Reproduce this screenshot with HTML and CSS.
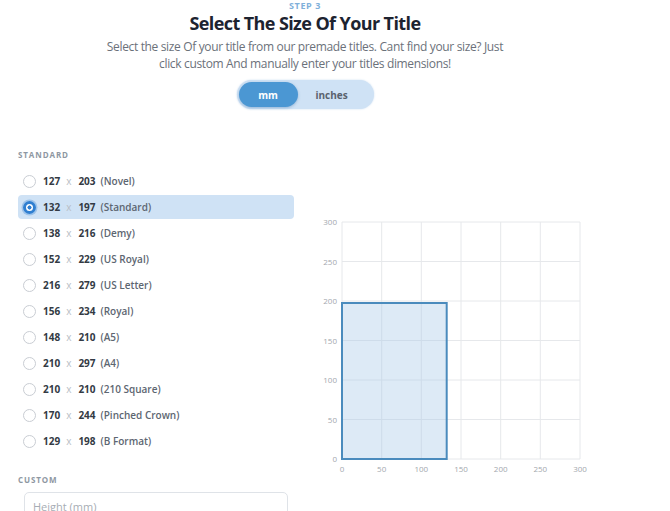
FILE: index.html
```html
<!DOCTYPE html>
<html lang="en">
<head>
    <meta charset="UTF-8">
    <meta name="viewport" content="width=device-width, initial-scale=1.0">
    <title>Step 3 | Title Size</title>
    <link rel="stylesheet" href="styles.css">
</head>
<body>
    <div class="page">
        <div class="step-head">
            <div class="step">STEP 3</div>
            <h1>Select The Size Of Your Title</h1>
            <p>Select the size Of your title from our premade titles. Cant find your size? Just<br>click custom And manually enter your titles dimensions!</p>
            <div class="unit-toggle">
                <button class="active">mm</button>
                <button>inches</button>
            </div>
        </div>

        <div class="size-picker">
            <div class="sizes">
                <h3>STANDARD</h3>
                <ul class="size-list">
                    <li><span class="radio"></span><b>127</b><i>x</i><b>203</b><span class="name">(Novel)</span></li>
                    <li class="selected"><span class="radio"></span><b>132</b><i>x</i><b>197</b><span class="name">(Standard)</span></li>
                    <li><span class="radio"></span><b>138</b><i>x</i><b>216</b><span class="name">(Demy)</span></li>
                    <li><span class="radio"></span><b>152</b><i>x</i><b>229</b><span class="name">(US Royal)</span></li>
                    <li><span class="radio"></span><b>216</b><i>x</i><b>279</b><span class="name">(US Letter)</span></li>
                    <li><span class="radio"></span><b>156</b><i>x</i><b>234</b><span class="name">(Royal)</span></li>
                    <li><span class="radio"></span><b>148</b><i>x</i><b>210</b><span class="name">(A5)</span></li>
                    <li><span class="radio"></span><b>210</b><i>x</i><b>297</b><span class="name">(A4)</span></li>
                    <li><span class="radio"></span><b>210</b><i>x</i><b>210</b><span class="name">(210 Square)</span></li>
                    <li><span class="radio"></span><b>170</b><i>x</i><b>244</b><span class="name">(Pinched Crown)</span></li>
                    <li><span class="radio"></span><b>129</b><i>x</i><b>198</b><span class="name">(B Format)</span></li>
                </ul>
                <h3 class="custom-label">CUSTOM</h3>
                <input class="custom-input" type="text" placeholder="Height (mm)">
            </div>

            <div class="preview">
                <svg width="290" height="270" viewBox="0 0 290 270">
                    <g class="grid">
                        <line x1="32" y1="13" x2="270" y2="13"/>
                        <line x1="32" y1="52.5" x2="270" y2="52.5"/>
                        <line x1="32" y1="92" x2="270" y2="92"/>
                        <line x1="32" y1="131.5" x2="270" y2="131.5"/>
                        <line x1="32" y1="171" x2="270" y2="171"/>
                        <line x1="32" y1="210.5" x2="270" y2="210.5"/>
                        <line x1="32" y1="250" x2="270" y2="250"/>
                        <line x1="32" y1="13" x2="32" y2="250"/>
                        <line x1="71.7" y1="13" x2="71.7" y2="250"/>
                        <line x1="111.3" y1="13" x2="111.3" y2="250"/>
                        <line x1="151" y1="13" x2="151" y2="250"/>
                        <line x1="190.7" y1="13" x2="190.7" y2="250"/>
                        <line x1="230.3" y1="13" x2="230.3" y2="250"/>
                        <line x1="270" y1="13" x2="270" y2="250"/>
                    </g>
                    <rect class="book" x="32" y="94" width="104.7" height="156"/>
                    <g class="ticks-y">
                        <text x="27" y="16">300</text>
                        <text x="27" y="55.5">250</text>
                        <text x="27" y="95">200</text>
                        <text x="27" y="134.5">150</text>
                        <text x="27" y="174">100</text>
                        <text x="27" y="213.5">50</text>
                        <text x="27" y="253">0</text>
                    </g>
                    <g class="ticks-x">
                        <text x="32" y="263">0</text>
                        <text x="71.7" y="263">50</text>
                        <text x="111.3" y="263">100</text>
                        <text x="151" y="263">150</text>
                        <text x="190.7" y="263">200</text>
                        <text x="230.3" y="263">250</text>
                        <text x="270" y="263">300</text>
                    </g>
                </svg>
            </div>
        </div>
    </div>
</body>
</html>
```

FILE: styles.css
```css
body {
    margin: 0;
    padding: 0;
    font-family: "Open Sans", "Noto Sans", sans-serif;
    background-color: white;
    color: #333;
}
.page {
    width: 610px;
}
.step-head {
    text-align: center;
    padding-top: 1px;
}
.step-head .step {
    font-size: 9px;
    font-weight: 700;
    letter-spacing: 0.6px;
    color: #7fb0da;
    line-height: 10px;
}
.step-head h1 {
    margin: 0;
    font-size: 18px;
    line-height: 24px;
    font-weight: 700;
    color: #1d2330;
    letter-spacing: -0.6px;
}
.step-head p {
    margin: 3px 0 0;
    font-size: 12px;
    line-height: 17px;
    color: #6b717a;
    letter-spacing: -0.35px;
}
.unit-toggle {
    display: inline-flex;
    margin-top: 8px;
    padding: 2px;
    background-color: #cfe2f5;
    border-radius: 15px;
    width: 133px;
    box-shadow: 0 0 2px rgba(120, 170, 220, 0.4);
}
.unit-toggle button {
    border: none;
    background: none;
    font-family: inherit;
    font-size: 10px;
    font-weight: 700;
    color: #5a636e;
    height: 25px;
    width: 68px;
    border-radius: 13px;
    padding: 0;
}
.unit-toggle button.active {
    width: 59px;
    background-color: #4b97d3;
    color: white;
    box-shadow: 0 1px 3px rgba(40, 100, 160, 0.35);
}
.size-picker {
    display: flex;
    margin-top: 40px;
}
.sizes {
    width: 276px;
    padding-left: 18px;
}
.sizes h3 {
    margin: 0;
    font-size: 8px;
    font-weight: 700;
    letter-spacing: 0.9px;
    color: #8e97a2;
    line-height: 12px;
}
.size-list {
    list-style: none;
    margin: 8px 0 0;
    padding: 0;
}
.size-list li {
    display: flex;
    align-items: center;
    height: 24px;
    margin-bottom: 2px;
    padding-left: 5px;
    border-radius: 4px;
    font-size: 10px;
}
.size-list li.selected {
    background-color: #cfe2f5;
}
.size-list .radio {
    width: 11px;
    height: 11px;
    border: 1px solid #c9cdd3;
    border-radius: 50%;
    background-color: white;
    margin-right: 7px;
}
.size-list li.selected .radio {
    width: 7px;
    height: 7px;
    border: 3px solid #2f7fd1;
    background: radial-gradient(circle, #2f7fd1 0 1.8px, white 2.3px);
    box-shadow: 0 0 0 1.5px rgba(47, 127, 209, 0.3);
}
.size-list b {
    font-weight: 700;
    color: #333a44;
}
.size-list i {
    font-style: normal;
    color: #b9bec5;
    margin: 0 7px 0 6px;
}
.size-list .name {
    margin-left: 5px;
    font-weight: 600;
    color: #5d6671;
}
.sizes .custom-label {
    margin-top: 21px;
}
.custom-input {
    display: block;
    box-sizing: border-box;
    width: 264px;
    height: 28px;
    margin: 6px 0 0 6px;
    padding: 0 8px;
    border: 1px solid #dfe3e8;
    border-radius: 5px;
    font-family: inherit;
    font-size: 11px;
    color: #333;
}
.custom-input::placeholder {
    color: #a7adb4;
}
.preview {
    padding-top: 60px;
    margin-left: 16px;
}
.preview svg {
    display: block;
}
.grid line {
    stroke: #e6e8eb;
    stroke-width: 1;
}
.book {
    fill: rgba(170, 202, 232, 0.4);
    stroke: #4a8bbd;
    stroke-width: 2;
}
.ticks-y text,
.ticks-x text {
    font-family: "Open Sans", sans-serif;
    font-size: 8px;
    fill: #a3a8ae;
}
.ticks-y text {
    text-anchor: end;
}
.ticks-x text {
    text-anchor: middle;
}
```
